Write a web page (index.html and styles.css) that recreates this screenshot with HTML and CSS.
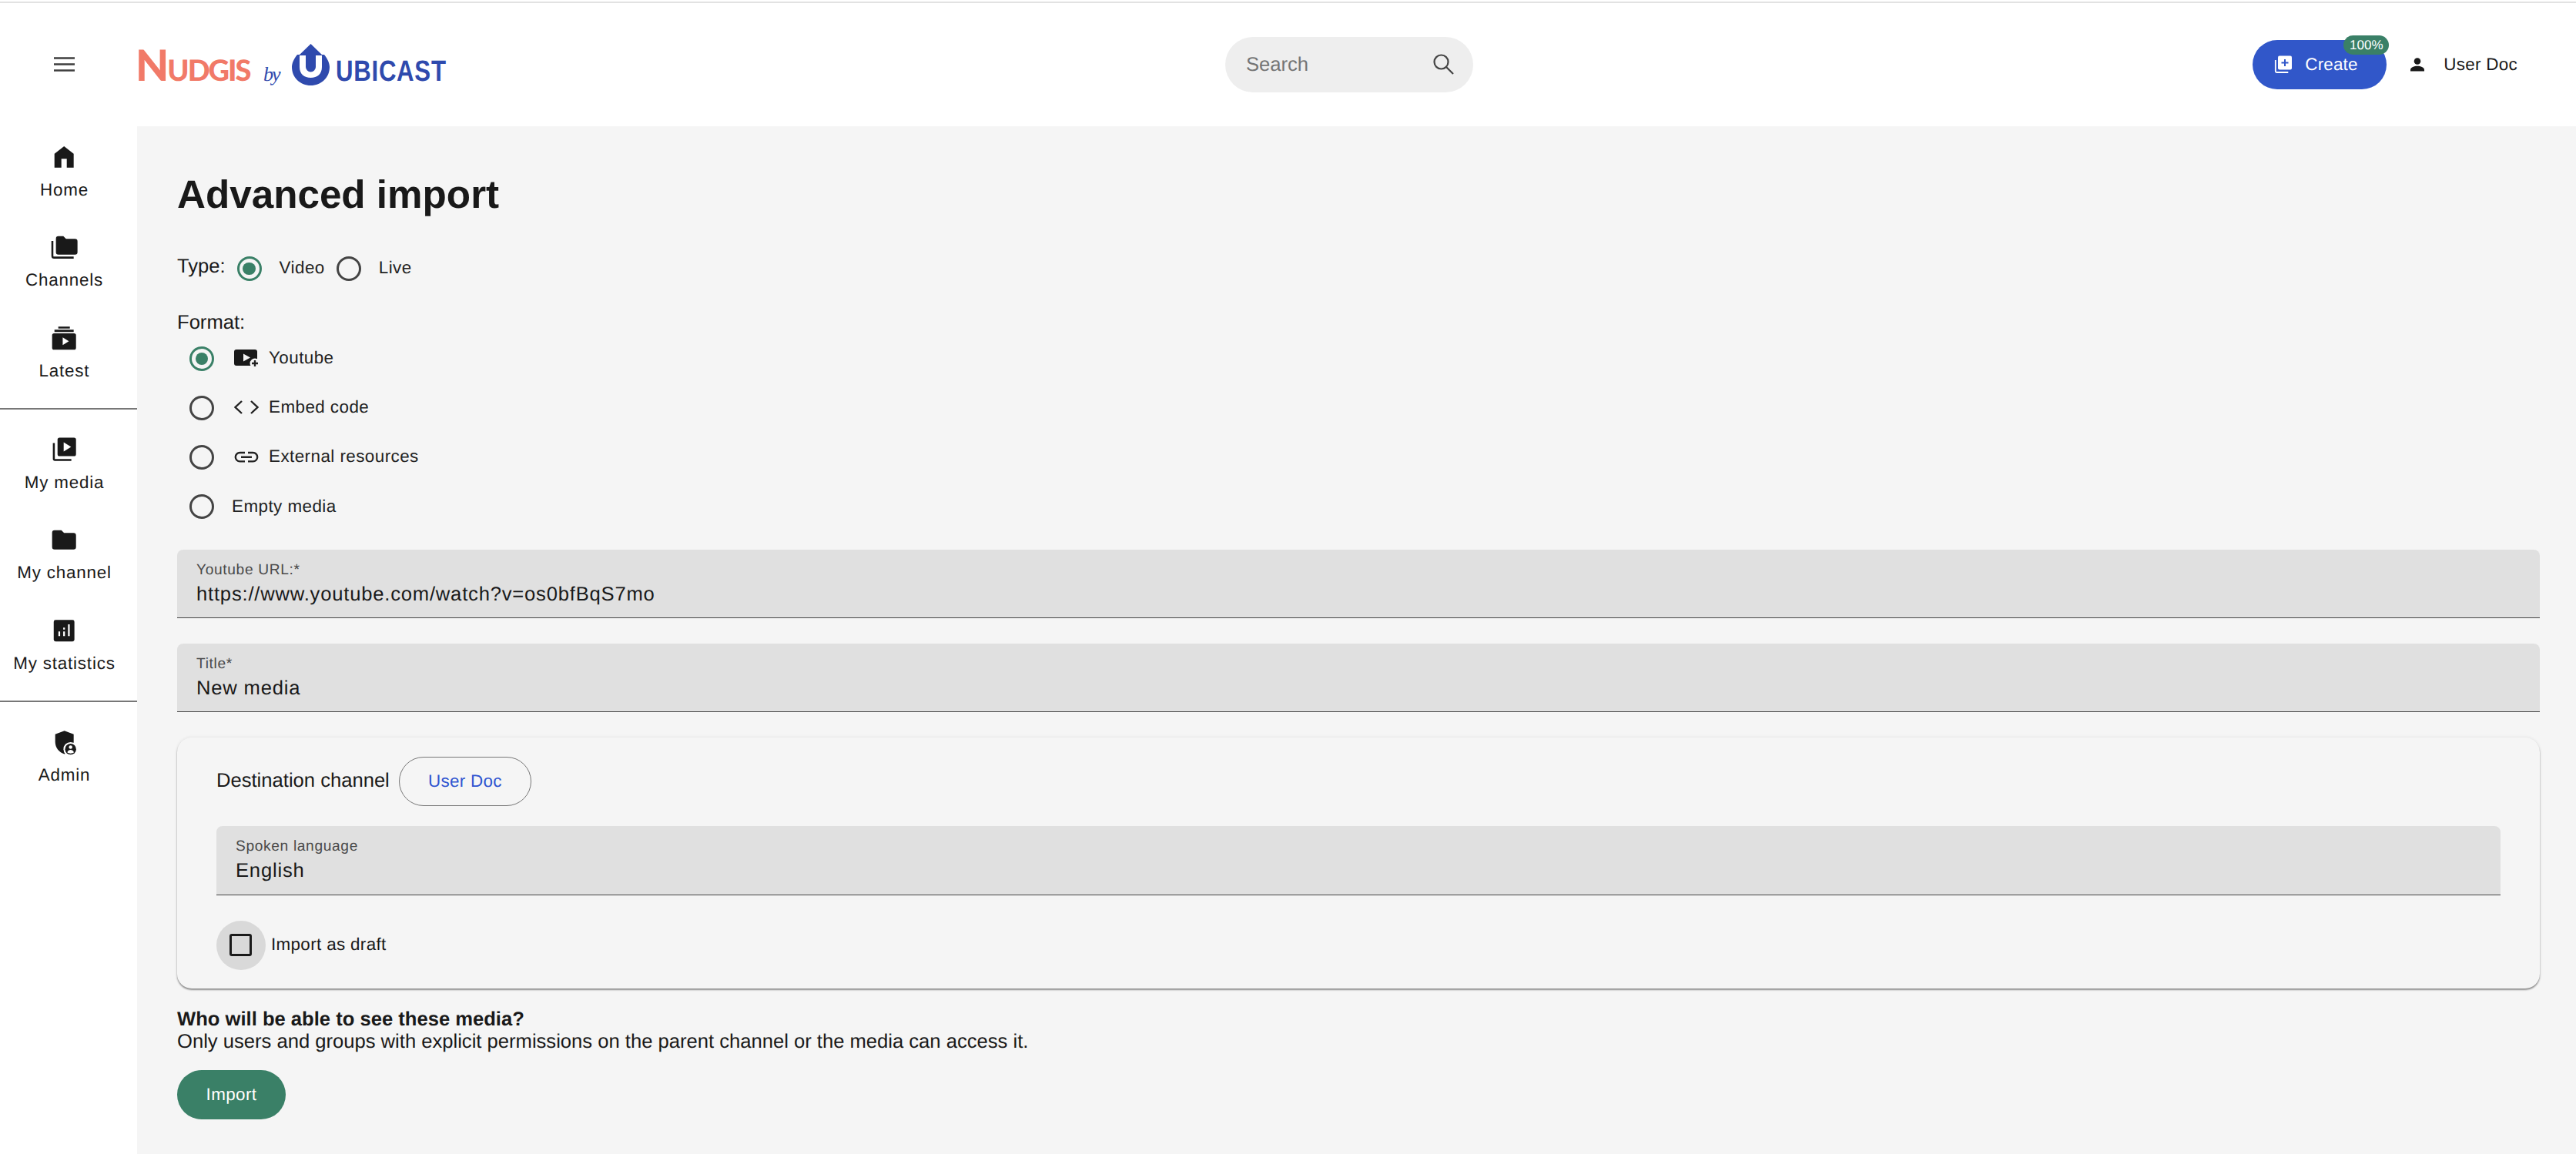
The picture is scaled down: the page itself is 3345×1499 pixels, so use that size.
FILE: index.html
```html
<!DOCTYPE html>
<html lang="en">
<head>
<meta charset="utf-8">
<title>Advanced import</title>
<link rel="stylesheet" href="styles.css">
</head>
<body>
<header class="topbar">
  <div class="brand-area">
    <button class="menu-btn" aria-label="Menu">
      <svg class="menu-icon" viewBox="0 0 27 19"><path d="M0 1.5h27M0 9.5h27M0 17.5h27"/></svg>
    </button>
    <div class="logo">
      <span class="logo-nudgis"><span class="logo-n">N</span>UDGIS</span>
      <span class="logo-by">by</span>
      <svg class="logo-mark" viewBox="0 0 49 54"><path d="M7 14C2 20 0 26 0 30C0 44 11 54 24.5 54C38 54 49 44 49 30C49 26 47 20 42 14H39V30C39 39 33 44 24.5 44C16 44 10 39 10 30V14Z"/><path d="M24.5 0L40 15H31V30a6.5 6.5 0 0 1-13 0V15H9Z"/></svg>
      <span class="logo-ubicast">UBICAST</span>
    </div>
  </div>
  <div class="search">
    <span class="search-text">Search</span>
    <svg class="search-icon" viewBox="0 0 28 28"><circle cx="10.5" cy="10.5" r="9"/><path d="M17 17l9 9"/></svg>
  </div>
  <div class="user-area">
    <button class="create-btn">
      <svg class="create-icon" viewBox="0 0 24 24"><rect x="5" y="0.5" width="18" height="18" rx="2"/><path class="create-bracket" d="M1.8 6v14.5a1.5 1.5 0 0 0 1.5 1.5h15"/><path class="create-plus" d="M14 5v9M9.5 9.5h9"/></svg>
      <span>Create</span>
      <span class="badge">100%</span>
    </button>
    <svg class="user-icon" viewBox="0 0 18 18"><circle cx="9" cy="4.5" r="4.3"/><path d="M0 17.5v-2c0-3 5-4.7 9-4.7s9 1.7 9 4.7v2z"/></svg>
    <span class="user-name">User Doc</span>
  </div>
</header>
<div class="layout">
  <nav class="sidebar">
    <a class="nav-item">
      <svg class="nav-icon" viewBox="0 0 24 24"><path d="M4.2 20.5V9.2L12 3.2l7.800 6v11.300h-5.600v-7.200H9.800v7.200z"/></svg>
      <span class="nav-label">Home</span>
    </a>
    <a class="nav-item">
      <svg class="nav-icon" viewBox="0 0 24 24"><path d="M7.400 3h4l2.200 2.200h7.300a2 2 0 0 1 2 2V16a2 2 0 0 1-2 2H7.400a2 2 0 0 1-2-2V5a2 2 0 0 1 2-2z"/><path class="line" d="M2.500 6.800V19a1.400 1.400 0 0 0 1.400 1.400h15.900"/></svg>
      <span class="nav-label">Channels</span>
    </a>
    <a class="nav-item">
      <svg class="nav-icon" viewBox="0 0 24 24"><path d="M7.300 2.600h9.400v1.600H7.300zM4.200 5.100h15.600V7H4.200z"/><rect x="2.300" y="8.200" width="19.400" height="13.200" rx="1.600"/><path class="knock" d="M10.900 11.400l5 3.100-5 3.100z"/></svg>
      <span class="nav-label">Latest</span>
    </a>
    <hr class="nav-rule">
    <a class="nav-item">
      <svg class="nav-icon" viewBox="0 0 24 24"><rect x="6.700" y="2.200" width="15" height="15" rx="1.600"/><path class="line" d="M3.700 6.600v12.900a.8.800 0 0 0 .8.800h13.400"/><path class="knock" d="M11.700 6l6 3.700-6 3.700z"/></svg>
      <span class="nav-label">My media</span>
    </a>
    <a class="nav-item">
      <svg class="nav-icon" viewBox="0 0 24 24"><path d="M4.300 4.200h5.500l2.200 2.200h7.700a2 2 0 0 1 2 2v9.400a2 2 0 0 1-2 2H4.300a2 2 0 0 1-2-2V6.200a2 2 0 0 1 2-2z"/></svg>
      <span class="nav-label">My channel</span>
    </a>
    <a class="nav-item">
      <svg class="nav-icon" viewBox="0 0 24 24"><rect x="3.600" y="3.300" width="16.800" height="17.500" rx="1.500"/><path class="knock" d="M7.400 12.600h1.400v3.800H7.400zM11.300 9.500h1.400v1.600h-1.400zM11.300 12.600h1.400v3.800h-1.400zM15.200 6.900h1.400v9.500h-1.400z"/></svg>
      <span class="nav-label">My statistics</span>
    </a>
    <hr class="nav-rule">
    <a class="nav-item">
      <svg class="nav-icon" viewBox="0 0 24 24"><path d="M12.300 2.600l7.500 2.800v6.200c0 4.800-3.200 8.800-7.500 10-4.300-1.200-7.500-5.200-7.500-10V5.400z"/><circle class="knock" cx="17.300" cy="17.600" r="5.800"/><circle cx="17.300" cy="17.600" r="4.500"/><circle class="knock" cx="17.300" cy="16" r="1.400"/><path class="knock" d="M14.600 20.200c.5-1.300 1.700-2 2.700-2s2.200.7 2.700 2c-.8.600-1.700.9-2.700.9s-1.900-.3-2.700-.9z"/></svg>
      <span class="nav-label">Admin</span>
    </a>
  </nav>
  <main class="content">
    <h1 class="page-title">Advanced import</h1>
    <div class="type-row">
      <span class="group-label type-label">Type:</span>
      <span class="radio radio-on"></span>
      <span class="opt-text">Video</span>
      <span class="radio radio-second"></span>
      <span class="opt-text">Live</span>
    </div>
    <div class="group-label format-label">Format:</div>
    <div class="format-list">
      <div class="format-row">
        <span class="radio radio-on"></span>
        <svg class="fmt-icon" viewBox="0 0 32 24"><rect x="0" y="0" width="30" height="21" rx="3"/><path class="bg-knock" d="M12 5.500l9 5-9 5z"/><circle class="bg-knock" cx="27" cy="18" r="6.500"/><path class="fmt-stroke" d="M27 14v8M23 18h8"/></svg>
        <span class="opt-text">Youtube</span>
      </div>
      <div class="format-row">
        <span class="radio"></span>
        <svg class="fmt-icon" viewBox="0 0 32 24"><path class="fmt-stroke" d="M10 3L1.500 11l8.500 8M22 3l8.500 8-8.500 8"/></svg>
        <span class="opt-text">Embed code</span>
      </div>
      <div class="format-row">
        <span class="radio"></span>
        <svg class="fmt-icon" viewBox="0 0 32 24"><path class="fmt-stroke" d="M14 6H7.500a5.700 5.700 0 0 0 0 11.400H14M18 6h6.500a5.700 5.700 0 0 1 0 11.400H18M9 11.700h14"/></svg>
        <span class="opt-text">External resources</span>
      </div>
      <div class="format-row">
        <span class="radio"></span>
        <span class="opt-text opt-plain">Empty media</span>
      </div>
    </div>
    <div class="field">
      <div class="field-label">Youtube URL:*</div>
      <div class="field-value">https://www.youtube.com/watch?v=os0bfBqS7mo</div>
    </div>
    <div class="field">
      <div class="field-label">Title*</div>
      <div class="field-value">New media</div>
    </div>
    <section class="card">
      <div class="dest-row">
        <span class="dest-label">Destination channel</span>
        <span class="chip">User Doc</span>
      </div>
      <div class="field field-inner">
        <div class="field-label">Spoken language</div>
        <div class="field-value">English</div>
      </div>
      <div class="check-row">
        <span class="check-halo"><span class="check-box"></span></span>
        <span class="check-text">Import as draft</span>
      </div>
    </section>
    <div class="notice">
      <strong class="notice-title">Who will be able to see these media?</strong>
      <p class="notice-body">Only users and groups with explicit permissions on the parent channel or the media can access it.</p>
    </div>
    <button class="import-btn">Import</button>
  </main>
</div>
</body>
</html>
```
FILE: styles.css
```css
* { box-sizing: border-box; }
html, body { margin: 0; padding: 0; height: 100%; }
body {
  padding-top: 2px;
  height: 1499px;
  overflow: hidden;
  background: #fff;
  color: #191919;
  font-family: "Liberation Sans", Arial, sans-serif;
  text-rendering: geometricPrecision;
  display: flex;
  flex-direction: column;
}
button { font-family: inherit; border: 0; padding: 0; cursor: pointer; text-rendering: geometricPrecision; }

/* top bar */
.topbar {
  flex: 0 0 162px;
  border-top: 2px solid #e2e2e2;
  display: flex;
  align-items: center;
  position: relative;
}
.brand-area {
  flex: 0 0 1591px;
  display: flex;
  align-items: center;
  padding-left: 70px;
}
.menu-btn { background: none; display: flex; margin-right: 79px; margin-top: -1px; }
.menu-icon { width: 27px; height: 19px; fill: none; stroke: #3f3f3f; stroke-width: 2.6; }
.logo { display: flex; align-items: baseline; height: 56px; }
.logo-nudgis { font-family: Lato, sans-serif; font-weight: 900; font-size: 38px; color: #f17a68; letter-spacing: -2px; width: 166px; line-height: 1; }
.logo-n { font-size: 56px; margin-right: 0; }
.logo-by { font-family: "Liberation Serif", serif; font-style: italic; font-size: 26px; letter-spacing: -2px; color: #2f4aad; width: 37px; }
.logo-mark { width: 49px; height: 54px; fill: #2f4aad; align-self: center; flex: none; }
.logo-ubicast { font-weight: 700; font-size: 38px; color: #2f4aad; margin-left: 8px; line-height: 1; letter-spacing: .9px; display: inline-block; transform: scaleX(.82); transform-origin: left center; white-space: nowrap; }

.search {
  flex: 0 0 322px;
  height: 72px;
  border-radius: 36px;
  background: #eee;
  display: flex;
  align-items: center;
  justify-content: space-between;
  padding: 0 24px 0 27px;
}
.search-text { font-size: 25.6px; color: #757575; }
.search-icon { width: 28px; height: 28px; fill: none; stroke: #444; stroke-width: 2.2; }

.user-area {
  margin-left: auto;
  display: flex;
  align-items: center;
  padding-right: 76px;
}
.create-btn {
  position: relative;
  width: 174px;
  height: 64px;
  border-radius: 32px;
  background: #3157c9;
  color: #fff;
  font-size: 22.4px;
  letter-spacing: .2px;
  display: flex;
  align-items: center;
  padding-left: 28px;
  gap: 16px;
}
.create-icon { width: 24px; height: 24px; fill: #fff; }
.create-bracket { fill: none; stroke: #fff; stroke-width: 1.8; }
.create-plus { fill: none; stroke: #3157c9; stroke-width: 2; }
.badge {
  position: absolute;
  left: 118px;
  top: -6px;
  width: 59px;
  height: 25px;
  border-radius: 12.5px;
  background: #3a8067;
  font-size: 17px;
  letter-spacing: 0;
  line-height: 25px;
  text-align: center;
}
.user-icon { width: 18px; height: 18px; fill: #191919; margin-left: 31px; }
.user-name { font-size: 22.4px; letter-spacing: .3px; margin-left: 25px; }

/* layout */
.layout { flex: 1; display: flex; min-height: 0; }
.sidebar { flex: 0 0 178px; background: #fff; }
.nav-item {
  width: 167px;
  height: 117.5px;
  padding-top: 20.8px;
  display: flex;
  flex-direction: column;
  align-items: center;
}
.nav-icon { width: 38.4px; height: 38.4px; fill: #191919; display: block; }
.nav-icon .line { fill: none; stroke: #191919; stroke-width: 1.6; }
.nav-icon .knock { fill: #fff; }
.nav-label { font-size: 22.4px; letter-spacing: .8px; line-height: 30px; margin-top: 8.5px; white-space: nowrap; }
.nav-rule { margin: 13px 0 12.500px; border: 0; height: 2px; background: #777; }

.content {
  flex: 1;
  min-width: 0;
  background: #f5f5f5;
  padding: 59px 47px 0 52px;
}
.page-title { margin: 0 0 34px; font-size: 51.2px; line-height: 60px; font-weight: 700; }
.type-row { display: flex; align-items: center; height: 64px; margin-bottom: 23px; }
.group-label { font-size: 25.6px; line-height: 30px; }
.type-label { padding-bottom: 6px; margin-right: 15px; }
.format-label { height: 30px; }
.format-list { padding-left: 16px; margin-bottom: 24px; }
.format-row { display: flex; align-items: center; height: 64px; }
.radio {
  flex: 0 0 32px;
  width: 32px;
  height: 32px;
  border-radius: 50%;
  border: 3.2px solid #444;
  display: flex;
  align-items: center;
  justify-content: center;
}
.radio-on { border-color: #3a8067; }
.radio-on::after { content: ""; width: 16.600px; height: 16.600px; border-radius: 50%; background: #3a8067; }
.radio-second { margin-left: 15px; }
.opt-text { font-size: 22.4px; letter-spacing: .45px; margin-left: 23px; color: #222; padding-bottom: 3px; }
.opt-plain { padding-bottom: 0; }
.format-row .opt-text { margin-left: 13px; }
.format-row .opt-plain { margin-left: 23px; }
.fmt-icon { width: 32px; height: 24px; margin-left: 26px; fill: #191919; flex: none; }
.bg-knock { fill: #f5f5f5; }
.fmt-stroke { fill: none; stroke: #222; stroke-width: 2.4; }

.field {
  height: 89.300px;
  background: #e0e0e0;
  border-radius: 8px 8px 0 0;
  border-bottom: 1.6px solid #444;
  padding: 13.500px 25px 0;
  margin-bottom: 32.850px;
}
.field-label { font-size: 19.2px; line-height: 26px; letter-spacing: .64px; color: #4a4a4a; }
.field-value { font-size: 25.6px; line-height: 36px; letter-spacing: .8px; margin-top: .5px; color: #191919; }
.card {
  height: 326px;
  border-radius: 19px;
  background: #f5f5f5;
  box-shadow: 0 2px 2px rgba(0,0,0,.4), 0 0 4px rgba(0,0,0,.09);
  padding: 25px 51px;
  margin-bottom: 26px;
}
.dest-row { display: flex; align-items: center; height: 64px; margin-bottom: 26px; }
.dest-label { font-size: 25.6px; padding-bottom: 2px; }
.chip {
  margin-left: 12px;
  width: 172px;
  height: 64px;
  border-radius: 32px;
  border: 1.6px solid #777;
  color: #2f54d0;
  font-size: 22.4px;
  letter-spacing: .3px;
  display: flex;
  align-items: center;
  justify-content: center;
}
.field-inner { margin-bottom: 33px; }
.check-row { display: flex; align-items: center; height: 64px; }
.check-halo {
  width: 64px;
  height: 64px;
  border-radius: 50%;
  background: #d9d9d9;
  display: flex;
  align-items: center;
  justify-content: center;
  padding-right: 2px;
}
.check-box { width: 29px; height: 29px; border: 3.2px solid #1a1a1a; border-radius: 3px; }
.check-text { font-size: 22.4px; letter-spacing: .35px; margin-left: 7px; padding-bottom: 1px; }
.notice { font-size: 25.6px; line-height: 29px; margin-bottom: 22px; }
.notice-title { display: block; }
.notice-body { margin: 0; }
.import-btn {
  width: 141px;
  height: 64px;
  border-radius: 32px;
  background: #3a8067;
  color: #fff;
  font-size: 22.4px;
  letter-spacing: .4px;
}
```
